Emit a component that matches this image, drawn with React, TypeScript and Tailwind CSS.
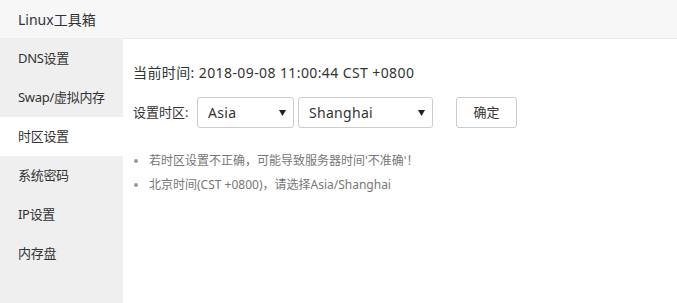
import React from "react";

const items = ["DNS设置", "Swap/虚拟内存", "时区设置", "系统密码", "IP设置", "内存盘"];

function Select({ value, width }: { value: string; width: string }) {
  return (
    <div
      className={`${width} h-[31px] border border-[#cccccc] rounded-[3px] bg-white flex items-center justify-between pl-[10px] pr-[7px]`}
    >
      <span className="text-[14px] text-[#333] tracking-[0.3px]">{value}</span>
      <svg width="7" height="6" viewBox="0 0 7 6" className="mt-[1px]">
        <path d="M0 0 H7 L3.5 6 Z" fill="#222" />
      </svg>
    </div>
  );
}

export default function App() {
  return (
    <div
      className="w-[677px] h-[303px] bg-white flex flex-col overflow-hidden"
      style={{ fontFamily: '"Noto Sans", "Noto Sans CJK SC", sans-serif' }}
    >
      <div className="h-[39px] shrink-0 bg-[#f7f7f7] border-b border-[#ececec] flex items-center pl-[18px] text-[14px] text-[#333]">
        Linux工具箱
      </div>
      <div className="flex flex-1">
        <div className="w-[123px] shrink-0 bg-[#efefef] flex flex-col">
          {items.map((it) => (
            <div
              key={it}
              className={`h-[39px] flex items-center pl-[18px] text-[13px] text-[#333] tracking-[-0.3px] ${
                it === "时区设置" ? "bg-white" : ""
              }`}
            >
              {it}
            </div>
          ))}
        </div>
        <div className="flex-1 pl-[10px] pt-[24px]">
          <div className="text-[14px] text-[#333] leading-[20px] tracking-[0.4px]">
            当前时间: 2018-09-08 11:00:44 CST +0800
          </div>
          <div className="flex items-center mt-[14px]">
            <span className="text-[13px] text-[#333] w-[64px]">设置时区:</span>
            <Select value="Asia" width="w-[97px]" />
            <div className="w-[4px]" />
            <Select value="Shanghai" width="w-[135px]" />
            <button className="ml-[23px] w-[61px] h-[31px] border border-[#cccccc] rounded-[3px] bg-white text-[13px] text-[#333]">
              确定
            </button>
          </div>
          <ul className="mt-[23px] flex flex-col gap-[5px] text-[12px] text-[#777] leading-[19px]">
            <li className="flex items-center">
              <span className="w-[4px] h-[4px] rounded-full bg-[#999] ml-[1px] mr-[11px]" />
              若时区设置不正确，可能导致服务器时间'不准确'！
            </li>
            <li className="flex items-center">
              <span className="w-[4px] h-[4px] rounded-full bg-[#999] ml-[1px] mr-[11px]" />
              北京时间(CST +0800)，请选择Asia/Shanghai
            </li>
          </ul>
        </div>
      </div>
    </div>
  );
}
